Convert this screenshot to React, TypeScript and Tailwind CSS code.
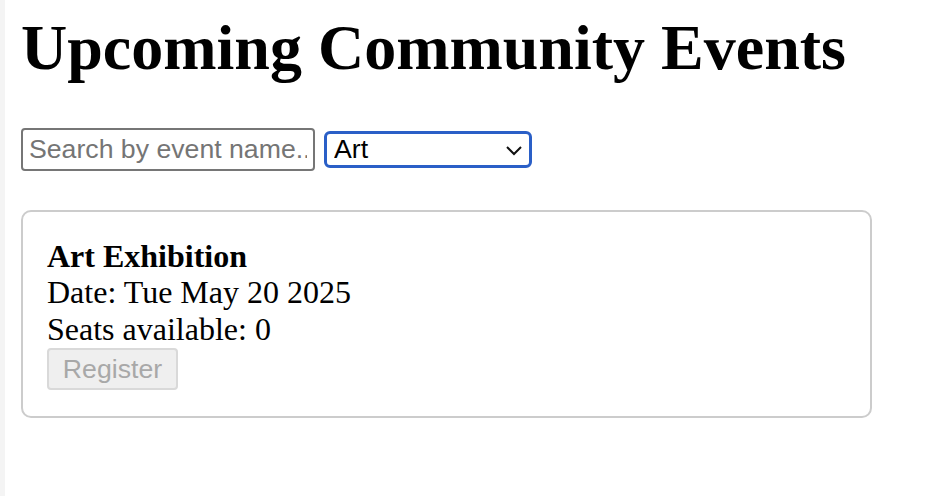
import { useState } from "react";

const events = [{ name: "Art Exhibition", date: "Tue May 20 2025", seats: 0, category: "Art" }];

export default function App() {
  const [query, setQuery] = useState("");
  const [category, setCategory] = useState("Art");

  const shown = events.filter(
    (e) => e.category === category && e.name.toLowerCase().includes(query.toLowerCase())
  );

  return (
    <div className="flex min-h-[496px] bg-white font-['Liberation_Serif',serif] text-black">
      <div className="w-[5px] shrink-0 bg-[#f4f4f4]" />
      <div className="flex flex-col pl-4">
        <h1 className="mt-[11px] text-[64px] font-bold leading-[1.15]">Upcoming Community Events</h1>

        <div className="mt-[43px] flex items-center gap-[9px]">
          <input
            value={query}
            onChange={(e) => setQuery(e.target.value)}
            placeholder="Search by event name..."
            className="h-[43px] w-[294px] rounded-[4px] border-2 border-[#767676] px-[6px] font-['Liberation_Sans',sans-serif] text-[26.67px] placeholder:text-[#757575] outline-none"
          />
          <div className="relative h-[37px] w-[208px] rounded-[6px] border-[3px] border-[#2a5fc7]">
            <select
              value={category}
              onChange={(e) => setCategory(e.target.value)}
              className="h-full w-full appearance-none bg-transparent pl-[7px] font-['Liberation_Sans',sans-serif] text-[26.67px] leading-none outline-none"
            >
              <option>All</option>
              <option>Art</option>
              <option>Music</option>
              <option>Sports</option>
            </select>
            <svg
              className="pointer-events-none absolute right-[6px] top-[9px]"
              width="18"
              height="14"
              viewBox="0 0 18 14"
              fill="none"
              stroke="#111"
              strokeWidth="2"
            >
              <path d="M2 4l7 7 7-7" />
            </svg>
          </div>
        </div>

        <div className="mt-[39px] w-[851px] rounded-[10px] border-2 border-[#cccccc] px-6 pt-[26px] pb-[26px]">
          {shown.map((e) => (
            <div key={e.name} className="flex flex-col text-[32px] leading-[1.15]">
              <strong className="font-bold">{e.name}</strong>
              <span>Date: {e.date}</span>
              <span>Seats available: {e.seats}</span>
              <button
                disabled={e.seats === 0}
                className="flex h-[42px] w-[131px] items-center justify-center rounded-[4px] border-2 border-[#d9d9d9] bg-[#efefef] font-['Liberation_Sans',sans-serif] text-[26.67px] text-[#a8a8a8]"
              >
                Register
              </button>
            </div>
          ))}
        </div>
      </div>
    </div>
  );
}
